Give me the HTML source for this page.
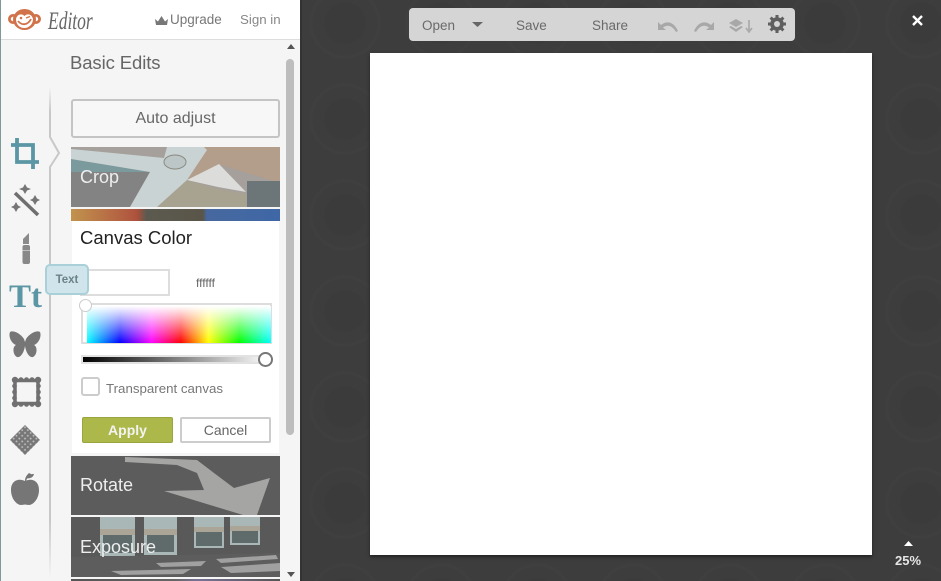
<!DOCTYPE html>
<html><head><meta charset="utf-8"><style>
*{box-sizing:border-box}
html{margin:0;padding:0;width:941px;height:581px;overflow:hidden;background:#3c3c3c}
body{margin:0;padding:0;width:941px;height:581px;overflow:hidden;background:#3c3c3c;font-family:"Liberation Sans",sans-serif;filter:blur(.35px)}
.a{position:absolute}
.t{position:absolute;white-space:nowrap;line-height:1}
svg{position:absolute;display:block}
</style></head><body>
<svg style="left:300px;top:0" width="641" height="581"><defs><pattern id="p" width="96" height="96" patternUnits="userSpaceOnUse" x="-3" y="-25"><circle cx="48" cy="48" r="21" fill="#3b3b3b"/><circle cx="48" cy="48" r="34" fill="none" stroke="#3f3f3f" stroke-width="3"/></pattern></defs><rect width="641" height="581" fill="#3d3d3d"/><rect width="641" height="581" fill="url(#p)"/><rect width="2" height="581" fill="#333"/></svg>

<div class="a" style="left:370px;top:53px;width:502px;height:502px;background:#fff;box-shadow:0 2px 3px #222"></div>

<div class="a" style="left:409px;top:8px;width:386px;height:33px;background:#d5d5d5;border-radius:4px"></div>
<div class="t" style="left:422px;top:18.500px;font-size:13.500px;color:#6a6a6a">Open</div>
<svg style="left:472px;top:22px" width="11" height="6"><path d="M0 0H11L5.500 5Z" fill="#666"/></svg>
<div class="t" style="left:516px;top:18.500px;font-size:13.500px;color:#6a6a6a">Save</div>
<div class="t" style="left:592px;top:18.500px;font-size:13.500px;color:#6a6a6a">Share</div>
<svg style="left:657px;top:18px" width="22" height="15"><path d="M1 4V12H9L6 9.500C10 6.500 15 7 19 14L21 13C17 4 10 2 4 7Z" fill="#a8a8a8"/></svg>
<svg style="left:693px;top:18px" width="22" height="15"><path d="M21 4V12H13L16 9.500C12 6.500 7 7 3 14L1 13C5 4 12 2 18 7Z" fill="#a8a8a8"/></svg>
<svg style="left:728px;top:18px" width="25" height="15"><path d="M1 5L8 1 15 5 8 9ZM1 9L3 8 8 11 13 8 15 9 8 14Z" fill="#a8a8a8"/><path d="M21 2V12M18 10L21 14 24 10" fill="none" stroke="#a8a8a8" stroke-width="1.600"/></svg>
<svg style="left:768px;top:15px" width="18" height="18" viewBox="0 0 18 18"><circle cx="9" cy="9" r="5" fill="none" stroke="#5f5f5f" stroke-width="3.600"/><path d="M9 0V18M0 9H18M2.600 2.600L15.400 15.400M15.400 2.600L2.600 15.400" stroke="#5f5f5f" stroke-width="3" /><circle cx="9" cy="9" r="3" fill="#d5d5d5"/></svg>

<svg style="left:911px;top:14px" width="13" height="13"><path d="M2 2L11 11M11 2L2 11" stroke="#fff" stroke-width="2.400"/></svg>
<svg style="left:904px;top:541px" width="9" height="6"><path d="M0 5H9L4.500 0Z" fill="#fff"/></svg>
<div class="t" style="left:895px;top:554px;font-size:13px;font-weight:bold;color:#e6e6e6">25%</div>

<div class="a" style="left:0;top:0;width:300px;height:581px;background:#f5f5f5;border-left:1px solid #7f9898"></div>
<div class="a" style="left:1px;top:0;width:299px;height:40px;background:#fff;border-bottom:1px solid #ddd"></div>
<svg style="left:8px;top:7px" width="33" height="24" viewBox="0 0 33 24"><circle cx="5" cy="12" r="3.600" fill="none" stroke="#d2724a" stroke-width="2.800"/><circle cx="28" cy="12" r="3.600" fill="none" stroke="#d2724a" stroke-width="2.800"/><ellipse cx="16.500" cy="12.500" rx="11.500" ry="10.500" fill="#d2724a"/><path d="M8 12C9 7 14 6 16.500 9 19 6 24 7 25 12 25 18 20 21 16.500 21 12 21 8 18 8 12Z" fill="#fff"/><path d="M10 14C14 19 20 18 23 12" fill="none" stroke="#d2724a" stroke-width="1.800"/><circle cx="13" cy="11" r="1.300" fill="#d2724a"/><path d="M18 11L22 9.500" stroke="#d2724a" stroke-width="1.300"/></svg>
<div class="t" style="left:48px;top:9px;font-size:25px;font-family:'Liberation Serif',serif;font-style:italic;color:#666;transform:scaleX(.7);transform-origin:0 0">Editor</div>
<svg style="left:155px;top:16px" width="13" height="9"><path d="M0 3L3 5.500 6.500 0 10 5.500 13 3 12 9H1Z" fill="#777"/></svg>
<div class="t" style="left:170px;top:12.500px;font-size:13.500px;color:#777">Upgrade</div>
<div class="t" style="left:240px;top:12.500px;font-size:13.300px;color:#888">Sign in</div>

<div class="t" style="left:70px;top:53.500px;font-size:18.500px;color:#666;letter-spacing:-.1px">Basic Edits</div>

<svg style="left:44px;top:85px" width="22" height="495"><defs><linearGradient id="v" x1="0" y1="0" x2="0" y2="1"><stop offset="0" stop-color="#c8c8c8" stop-opacity="0"/><stop offset=".05" stop-color="#c8c8c8"/><stop offset=".88" stop-color="#c8c8c8"/><stop offset="1" stop-color="#c8c8c8" stop-opacity="0"/></linearGradient></defs><path d="M6 2V52L15 68 6 82V494" fill="none" stroke="url(#v)" stroke-width="2"/></svg>

<div class="a" style="left:71px;top:99px;width:209px;height:39px;background:#f7f7f7;border:2px solid #c4c4c4;border-radius:3px"></div>
<div class="t" style="left:71px;width:209px;text-align:center;top:110.500px;font-size:16px;color:#666">Auto adjust</div>

<svg style="left:71px;top:147px" width="209" height="60" viewBox="0 0 209 60"><rect width="209" height="60" fill="#a5a09c"/><path d="M133 0H209V36L150 18 116 33Z" fill="#b39d8b"/><path d="M0 12L79 25 59 60H0Z" fill="#838383"/><path d="M0 12L79 25 0 25Z" fill="#7b9a9e"/><path d="M86 60L116 33 147 42 175 47V60Z" fill="#a8a290"/><path d="M0 2L93 11 96 0H133L136 3 116 33 86 60H59L79 25 0 12Z" fill="#c9d3d3"/><path d="M116 33L148 17 175 45 147 40Z" fill="#dcdcda"/><rect x="176" y="34" width="33" height="26" fill="#6c7678"/><ellipse cx="104" cy="15" rx="11" ry="7" fill="#bcc6c6" stroke="#8a8a80"/></svg>
<div class="t" style="left:80px;top:168px;font-size:18px;color:#eee">Crop</div>
<div class="a" style="left:71px;top:209px;width:209px;height:12px;background:linear-gradient(90deg,#c1934d 0,#b0553f 30%,#a8503c 32%,#5c5a50 36%,#595548 63%,#47689f 65%,#3f67a6 100%)"></div>
<div class="a" style="left:72px;top:221px;width:207px;height:232px;background:#fff"></div>
<div class="t" style="left:80px;top:229px;font-size:18.500px;color:#222">Canvas Color</div>
<div class="a" style="left:80px;top:269px;width:90px;height:27px;background:#fff;border:2px solid #ddd"></div>
<div class="t" style="left:196px;top:277px;font-size:12px;color:#666">ffffff</div>

<div class="a" style="left:81px;top:303px;width:191px;height:41px;border:2px solid #ddd;background:#fff"></div>
<div class="a" style="left:87px;top:306px;width:184px;height:37px;background:linear-gradient(180deg,#fff 0,rgba(255,255,255,0) 100%),linear-gradient(90deg,#0ff 0,#00f 18%,#f0f 35%,#f00 51%,#ff0 66%,#0f0 83%,#0ff 100%)"></div>
<div class="a" style="left:79px;top:299px;width:13px;height:13px;border-radius:50%;background:#fff;border:1px solid #ccc"></div>
<div class="a" style="left:81px;top:355px;width:191px;height:9px;border:2px solid #e2e2e2;background:linear-gradient(90deg,#000,#fff)"></div>
<div class="a" style="left:258px;top:352px;width:15px;height:15px;border-radius:50%;background:#fff;border:2px solid #777"></div>
<div class="a" style="left:81px;top:377px;width:19px;height:19px;border-radius:3px;border:2px solid #ccc;background:#fff"></div>
<div class="t" style="left:106px;top:381.500px;font-size:13.300px;color:#777">Transparent canvas</div>
<div class="a" style="left:82px;top:417px;width:91px;height:26px;background:#adb84a;border:1px solid #9aa53f;border-radius:2px"></div>
<div class="t" style="left:82px;width:91px;text-align:center;top:423px;font-size:14px;font-weight:bold;color:#f3f3f3">Apply</div>
<div class="a" style="left:180px;top:417px;width:91px;height:26px;background:#fff;border:2px solid #ccc;border-radius:2px"></div>
<div class="t" style="left:180px;width:91px;text-align:center;top:423px;font-size:14px;color:#666">Cancel</div>

<svg style="left:71px;top:456px" width="209" height="59" viewBox="0 0 209 59"><rect width="209" height="59" fill="#5c5c5c"/><path d="M54 1L126 4 143 17 163 32 199 22 186 59H172L93 35 133 34 126 17 106 9 54 6Z" fill="#a5a5a3"/></svg>
<div class="t" style="left:80px;top:476px;font-size:18px;color:#eee">Rotate</div>

<svg style="left:71px;top:517px" width="209" height="60" viewBox="0 0 209 60"><rect width="209" height="60" fill="#595959"/><g fill="#a9b8b6"><rect x="29" y="0" width="35" height="39"/><rect x="73" y="0" width="33" height="38"/><rect x="123" y="0" width="30" height="31"/><rect x="159" y="0" width="30" height="28"/></g><g fill="#aaa596"><rect x="29" y="12" width="35" height="6"/><rect x="73" y="12" width="33" height="6"/><rect x="123" y="10" width="30" height="5"/><rect x="159" y="9" width="30" height="5"/></g><g fill="#5f6a6a"><rect x="32" y="18" width="29" height="18"/><rect x="76" y="18" width="27" height="17"/><rect x="125" y="15" width="26" height="14"/><rect x="161" y="14" width="26" height="12"/></g><path d="M0 40L209 36V60H0Z" fill="#5d5d5d"/><path d="M85 46L135 44 130 49 90 50ZM145 42L205 38 207 42 150 46ZM40 54L120 52 112 57 50 58ZM150 50L209 46V54L160 56Z" fill="#a0a0a0"/></svg>
<div class="t" style="left:80px;top:538px;font-size:18px;color:#eee">Exposure</div>
<div class="a" style="left:71px;top:579px;width:209px;height:2px;background:linear-gradient(90deg,#555,#666 50%,#7a7396 60%,#555)"></div>

<div class="a" style="left:286px;top:59px;width:8px;height:376px;background:#bdbdbd;border-radius:4px"></div>
<svg style="left:287px;top:44px" width="8" height="5"><path d="M0 5H8L4 0Z" fill="#555"/></svg>
<svg style="left:287px;top:572px" width="8" height="5"><path d="M0 0H8L4 5Z" fill="#555"/></svg>

<svg style="left:10px;top:138px" width="30" height="31" viewBox="0 0 30 31"><path d="M7 0V24H29M1 7H23V31" fill="none" stroke="#5b96a4" stroke-width="3.800"/></svg>
<svg style="left:11px;top:184px" width="30" height="35" viewBox="0 0 30 35"><path d="M4 9L27 31" stroke="#6f6f6f" stroke-width="3.500"/><path d="M14 0L16 3.500 20 5 16 6.500 14 10 12 6.500 8 5 12 3.500ZM24 11L26 14.500 29 16 26 17.500 24 21 22 17.500 19 16 22 14.500ZM5 18L7 21.500 10 23 7 24.500 5 28 3 24.500 0 23 3 21.500Z" fill="#757575"/></svg>
<svg style="left:21px;top:232px" width="10" height="32" viewBox="0 0 10 32"><path d="M2 12V7L8 1V12Z" fill="#8a8a8a"/><rect x="1.500" y="13" width="7.500" height="19" rx="2" fill="#888"/><rect x="1.500" y="18" width="7.500" height="1" fill="#c0c0c0"/></svg>
<div class="t" style="left:9px;top:281px;font-family:'Liberation Serif',serif;font-weight:bold;font-size:33px;color:#5b96a4">Tt</div>
<svg style="left:9px;top:331px" width="32" height="27" viewBox="0 0 32 27"><path d="M15 8C11 2 4-1 1 1-1 6 3 13 7 14 3 16 4 24 8 26 12 27 15 21 16 15 17 21 20 27 24 26 28 24 29 16 25 14 29 13 33 6 31 1 28-1 21 2 17 8L16 11Z" fill="#767676"/></svg>
<svg style="left:11px;top:376px" width="31" height="32" viewBox="0 0 31 32"><rect x="4" y="4.500" width="23" height="23" fill="none" stroke="#707070" stroke-width="3.500"/><g fill="#707070"><circle cx="4" cy="4" r="3.200"/><circle cx="27" cy="4" r="3.200"/><circle cx="4" cy="28" r="3.200"/><circle cx="27" cy="28" r="3.200"/><circle cx="10" cy="3.500" r="2.300"/><circle cx="15.500" cy="3.500" r="2.300"/><circle cx="21" cy="3.500" r="2.300"/><circle cx="10" cy="28.500" r="2.300"/><circle cx="15.500" cy="28.500" r="2.300"/><circle cx="21" cy="28.500" r="2.300"/><circle cx="3.500" cy="10" r="2.300"/><circle cx="3.500" cy="16" r="2.300"/><circle cx="3.500" cy="22" r="2.300"/><circle cx="27.500" cy="10" r="2.300"/><circle cx="27.500" cy="16" r="2.300"/><circle cx="27.500" cy="22" r="2.300"/></g></svg>
<svg style="left:10px;top:425px" width="30" height="30" viewBox="0 0 30 30"><defs><pattern id="d" width="4" height="4" patternUnits="userSpaceOnUse" patternTransform="rotate(45 15 15)"><rect width="4" height="4" fill="#777"/><rect x="1.200" y="1.200" width="1.600" height="1.600" fill="#c4c4c4"/></pattern></defs><path d="M15 0L30 15 15 30 0 15Z" fill="url(#d)"/></svg>
<svg style="left:11px;top:472px" width="28" height="34" viewBox="0 0 28 34"><path d="M14 9C8 6 0 8 0 18 0 27 6 33 10 33 12 33 13 32.500 14 32.500 15 32.500 16 33 18 33 22 33 28 27 28 18 28 8 20 6 14 9Z" fill="#767676"/><path d="M14 9C14 5 16 3 18 1L20 2C18 4 16 6 15 9ZM15 6C17 2 20 2 23 2 22 6 18 7 15 6Z" fill="#767676"/></svg>

<div class="a" style="left:45px;top:264px;width:44px;height:31px;background:#cfe5eb;border:2px solid #a9d0d9;border-radius:5px"></div>
<div class="t" style="left:45px;width:44px;text-align:center;top:275px;font-size:11.500px;font-weight:bold;color:#6b8288">Text</div>
</body></html>
